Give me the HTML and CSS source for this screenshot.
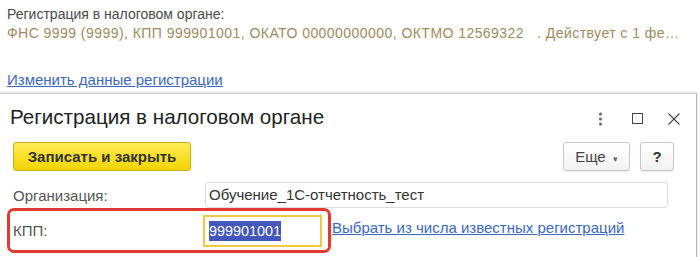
FILE: index.html
```html
<!DOCTYPE html>
<html lang="ru">
<head>
  <meta charset="UTF-8" />
  <title>Регистрация в налоговом органе</title>
  <link rel="stylesheet" href="styles.css">
</head>
<body>
  <div class="info">
    <div class="info-title">Регистрация в налоговом органе:</div>
    <div class="info-value">ФНС 9999 (9999), КПП 999901001, ОКАТО 00000000000, ОКТМО 12569322&nbsp;&nbsp;&nbsp;. Действует с 1 фе…</div>
    <a class="link info-link" href="#">Изменить данные регистрации</a>
  </div>

  <div class="dialog">
    <div class="dialog-head">
      <div class="dialog-title">Регистрация в налоговом органе</div>
      <div class="head-icons">
        <svg width="5" height="14" viewBox="0 0 5 14"><circle cx="2.5" cy="2" r="1.5" fill="#666"/><circle cx="2.5" cy="7" r="1.5" fill="#666"/><circle cx="2.5" cy="12" r="1.5" fill="#666"/></svg>
        <svg width="11" height="11" viewBox="0 0 11 11"><rect x="0.5" y="0.5" width="10" height="10" fill="none" stroke="#444" stroke-width="1"/></svg>
        <svg width="12" height="12" viewBox="0 0 12 12"><path d="M0.5 0.5 L11.5 11.5 M11.5 0.5 L0.5 11.5" stroke="#444" stroke-width="1.1"/></svg>
      </div>
    </div>

    <div class="toolbar">
      <button class="btn-save">Записать и закрыть</button>
      <div class="toolbar-right">
        <button class="btn">Еще <span class="caret">▾</span></button>
        <button class="btn btn-help">?</button>
      </div>
    </div>

    <div class="row">
      <div class="label">Организация:</div>
      <div class="field field-org">Обучение_1С-отчетность_тест</div>
    </div>

    <div class="row row-kpp">
      <div class="marked">
        <div class="label">КПП:</div>
        <div class="field field-kpp"><span class="selected">999901001</span></div>
      </div>
      <a class="link" href="#">Выбрать из числа известных регистраций</a>
    </div>
  </div>
</body>
</html>
```

FILE: styles.css
```css
body {
  margin: 0;
  font-family: 'Liberation Sans', Arial, sans-serif;
  background: white;
  color: #333;
  overflow: hidden;
}

.info {
  padding: 5px 7px 0;
}

.info-title {
  font-size: 14px;
  color: #4a4a4a;
  line-height: 19px;
}

.info-value {
  font-size: 14px;
  letter-spacing: 0.45px;
  color: #a08a60;
  line-height: 19px;
  white-space: nowrap;
}

.link {
  color: #3b67c0;
  font-size: 15px;
  text-decoration: underline;
}

.info-link {
  display: inline-block;
  margin-top: 28px;
  line-height: 18px;
}

.dialog {
  margin-top: 4px;
  width: 697px;
  height: 170px;
  box-sizing: border-box;
  border-top: 1px solid #c9c9c9;
  border-right: 1px solid #b5b5b5;
  box-shadow: 0 -1px 2px rgba(0, 0, 0, 0.12);
  font-size: 15px;
}

.dialog-head {
  display: flex;
  align-items: center;
  justify-content: space-between;
  padding: 9px 16px 0 10px;
  height: 28px;
}

.dialog-title {
  font-size: 20.6px;
  color: #222;
}

.head-icons {
  display: flex;
  align-items: center;
  gap: 25px;
  margin-top: 3px;
}

.head-icons svg:first-child {
  margin-right: 4px;
}

.toolbar {
  display: flex;
  justify-content: space-between;
  padding: 11px 22px 0 13px;
}

.toolbar-right {
  display: flex;
  gap: 10px;
}

button {
  font-family: inherit;
  cursor: pointer;
}

.btn-save {
  width: 178px;
  height: 29px;
  font-size: 15px;
  font-weight: bold;
  color: #333;
  background: linear-gradient(to bottom, #ffec55, #f3d400);
  border: 1px solid #c9ae18;
  border-radius: 3px;
}

.btn {
  width: 67px;
  height: 29px;
  padding: 0;
  font-size: 15px;
  color: #444;
  background: linear-gradient(to bottom, #ffffff, #f2f2f2);
  border: 1px solid #c6c6c6;
  border-radius: 3px;
  box-shadow: 0 1px 1px rgba(0, 0, 0, 0.08);
}

.btn .caret {
  font-size: 9px;
  color: #666;
  margin-left: 3px;
}

.btn-help {
  width: 34px;
  font-weight: bold;
  color: #333;
}

.row {
  display: flex;
  align-items: center;
}

.label {
  width: 192px;
  color: #555;
}

.row:not(.row-kpp) {
  padding: 11px 0 0 13px;
}

.field {
  box-sizing: border-box;
  color: #333;
}

.field-org {
  width: 463px;
  height: 26px;
  line-height: 24px;
  padding-left: 3px;
  border: 1px solid #dcdcdc;
  border-radius: 3px;
}

.row-kpp {
  padding-left: 7px;
}

.marked {
  display: flex;
  align-items: center;
  width: 324px;
  height: 45px;
  box-sizing: border-box;
  padding: 0 6px 0 3px;
  border: 3px solid #e23a33;
  border-radius: 7px;
}

.marked .label {
  width: 190px;
}

.field-kpp {
  width: 119px;
  height: 32px;
  font-size: 14.4px;
  line-height: 28px;
  padding-left: 4px;
  border: 2px solid #f5c83a;
}

.selected {
  background: #4357bd;
  color: white;
  padding: 2px 0;
}

.row-kpp .link {
  margin-left: 1px;
  margin-top: -6px;
}
```
